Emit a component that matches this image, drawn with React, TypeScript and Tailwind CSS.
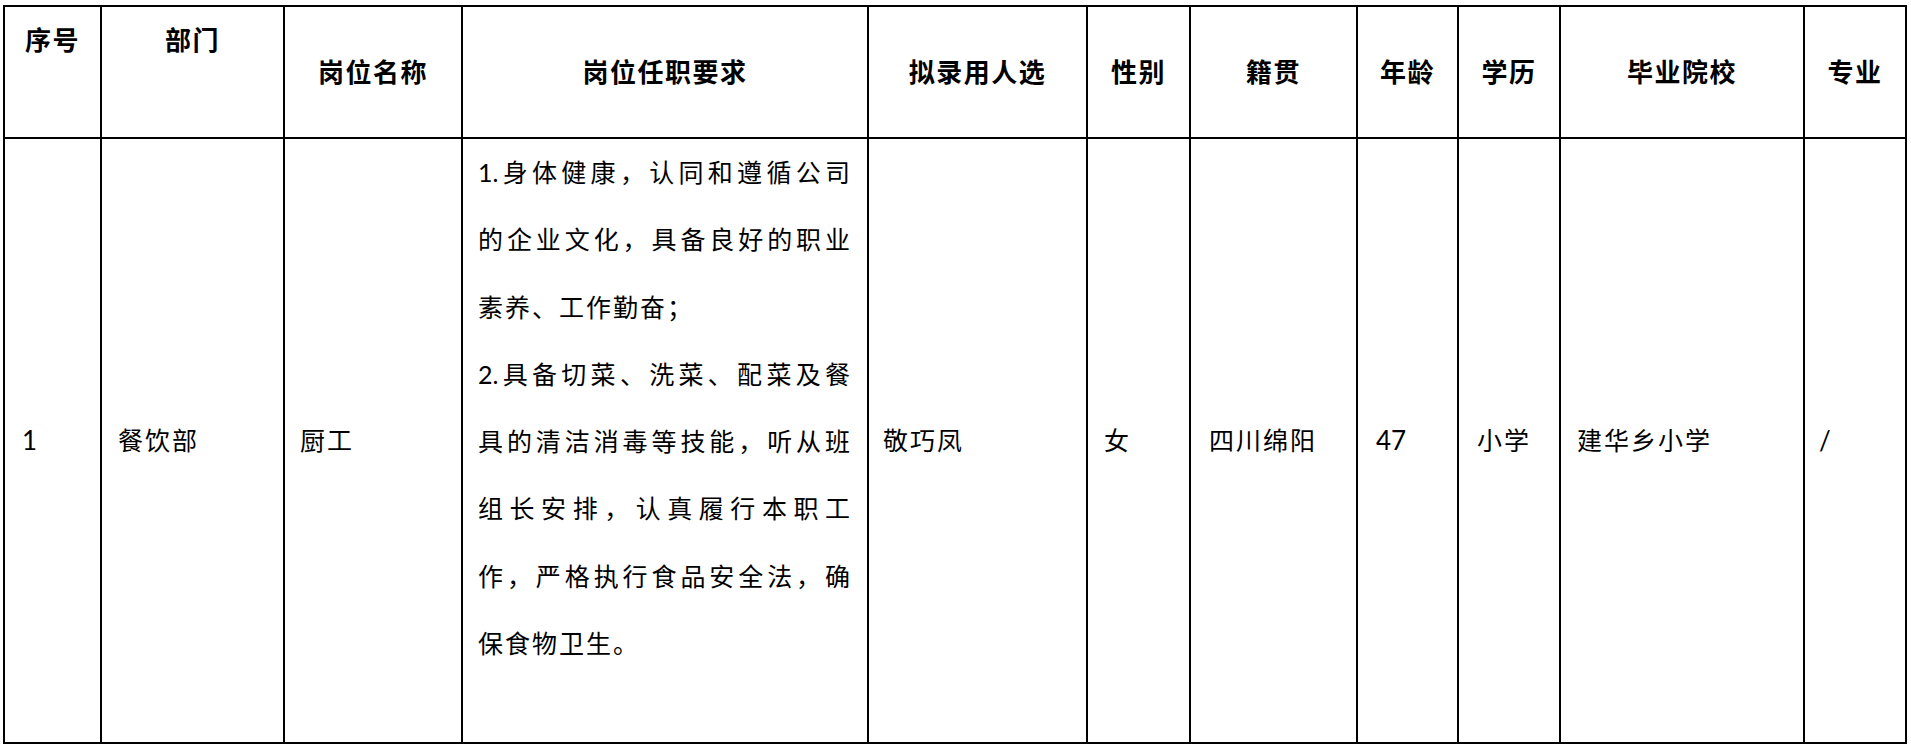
import React from 'react';

const cols = [
  { title: '序号', top: true },
  { title: '部门', top: true },
  { title: '岗位名称' },
  { title: '岗位任职要求' },
  { title: '拟录用人选' },
  { title: '性别' },
  { title: '籍贯' },
  { title: '年龄' },
  { title: '学历' },
  { title: '毕业院校' },
  { title: '专业' },
];

// each visual line of the requirements cell, as it wraps in the document
const reqLines = [
  { text: '1.身体健康，认同和遵循公司', full: true },
  { text: '的企业文化，具备良好的职业', full: true },
  { text: '素养、工作勤奋；', full: false },
  { text: '2.具备切菜、洗菜、配菜及餐', full: true },
  { text: '具的清洁消毒等技能，听从班', full: true },
  { text: '组长安排，认真履行本职工', full: true },
  { text: '作，严格执行食品安全法，确', full: true },
  { text: '保食物卫生。', full: false },
];

const font = 'font-["Lato","Noto_Sans_CJK_SC",sans-serif]';

function Cell({ children, className = '' }: { children?: React.ReactNode; className?: string }) {
  return <div className={`border-r-2 border-b-2 border-black ${className}`}>{children}</div>;
}

export default function App() {
  return (
    <div className={`h-[748px] w-[1911px] overflow-hidden bg-white text-black ${font}`}>
      <div className="ml-[3px] mt-[5px] grid w-fit grid-cols-[97px_183px_178px_406px_219px_103px_167px_101px_102px_244px_102px] grid-rows-[132px_605px] border-l-2 border-t-2 border-black">
        {cols.map((c) => (
          <Cell
            key={c.title}
            className={`flex justify-center ${c.top ? 'items-start pt-[17px]' : 'items-center'}`}
          >
            <span className="text-[26px] font-semibold leading-[32px] tracking-[1.5px]">{c.title}</span>
          </Cell>
        ))}

        <Cell className="flex items-center pl-[17px] text-[26px]">1</Cell>
        <Cell className="flex items-center pl-[16px] text-[25px] tracking-[2px]">餐饮部</Cell>
        <Cell className="flex items-center pl-[15px] text-[25px] tracking-[2px]">厨工</Cell>
        <Cell className="pl-[15px] pr-[17px] text-[25px] leading-[67.3px]">
          {reqLines.map((l) => (
            <div
              key={l.text}
              className={l.full ? 'text-justify [text-align-last:justify]' : 'tracking-[2px]'}
            >
              {l.text}
            </div>
          ))}
        </Cell>
        <Cell className="flex items-center pl-[14px] text-[25px] tracking-[2px]">敬巧凤</Cell>
        <Cell className="flex items-center pl-[16px] text-[25px]">女</Cell>
        <Cell className="flex items-center pl-[18px] text-[25px] tracking-[2px]">四川绵阳</Cell>
        <Cell className="flex items-center pl-[18px] text-[26px]">47</Cell>
        <Cell className="flex items-center pl-[18px] text-[25px] tracking-[2px]">小学</Cell>
        <Cell className="flex items-center pl-[16px] text-[25px] tracking-[2px]">建华乡小学</Cell>
        <Cell className="flex items-center pl-[14px] text-[26px]">/</Cell>
      </div>
    </div>
  );
}
